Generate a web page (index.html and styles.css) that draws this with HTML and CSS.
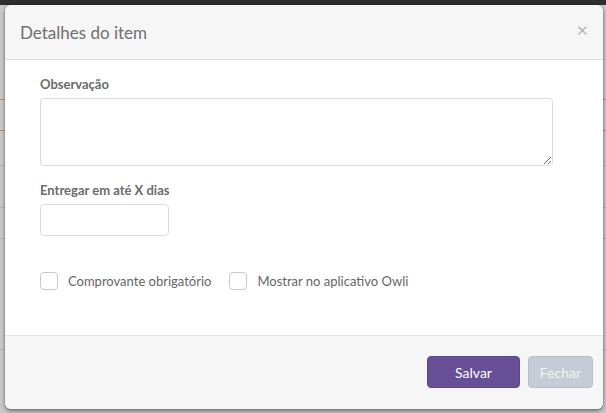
FILE: index.html
```html
<!DOCTYPE html>
<html lang="pt-BR">
<head>
    <meta charset="UTF-8">
    <meta name="viewport" content="width=device-width, initial-scale=1.0">
    <title>Detalhes do item</title>
    <link rel="stylesheet" href="styles.css">
</head>
<body>
    <div class="backdrop">
        <div class="modal">
            <div class="modal-header">
                <h4 class="modal-title">Detalhes do item</h4>
                <button class="close-btn" type="button">&times;</button>
            </div>

            <div class="modal-body">
                <div class="form-group">
                    <label class="form-label" for="obs">Observação</label>
                    <textarea class="form-control obs" id="obs"></textarea>
                </div>

                <div class="form-group">
                    <label class="form-label" for="dias">Entregar em até X dias</label>
                    <input class="form-control dias" id="dias" type="text">
                </div>

                <div class="checks">
                    <label class="check">
                        <span class="check-box"></span>
                        Comprovante obrigatório
                    </label>
                    <label class="check">
                        <span class="check-box"></span>
                        Mostrar no aplicativo Owli
                    </label>
                </div>
            </div>

            <div class="modal-footer">
                <button class="btn btn-primary" type="button">Salvar</button>
                <button class="btn btn-default" type="button">Fechar</button>
            </div>
        </div>
    </div>
</body>
</html>
```

FILE: styles.css
```css
* {
    margin: 0;
    padding: 0;
    box-sizing: border-box;
    font-family: Lato, 'Open Sans', sans-serif;
}

body {
    width: 606px;
    height: 413px;
    overflow: hidden;
    background: #c9c9c9;
}

/* página escurecida atrás do modal */
.backdrop {
    height: 413px;
    padding-top: 5px;
    background:
        linear-gradient(#2e2e2e, #2e2e2e) top / 100% 5px no-repeat,
        linear-gradient(#d9806f, #d9806f) 0 99px / 100% 1px no-repeat,
        linear-gradient(#d9806f, #d9806f) 0 130px / 100% 1px no-repeat,
        linear-gradient(#b4b4b4, #b4b4b4) 0 165px / 100% 1px no-repeat,
        linear-gradient(#b4b4b4, #b4b4b4) 0 207px / 100% 1px no-repeat,
        linear-gradient(#b4b4b4, #b4b4b4) 0 238px / 100% 1px no-repeat,
        linear-gradient(#b4b4b4, #b4b4b4) 0 349px / 100% 1px no-repeat,
        #c9c9c9;
}

.modal {
    width: 598px;
    height: 404px;
    margin-left: 5px;
    background: #fff;
    border-radius: 6px;
    overflow: hidden;
    box-shadow: 0 2px 4px rgba(0, 0, 0, 0.45), 0 0 1px rgba(0, 0, 0, 0.6);
    display: flex;
    flex-direction: column;
}

.modal-header {
    height: 55px;
    background: #f6f6f6;
    border-bottom: 1px solid #dedede;
    display: flex;
    align-items: center;
    justify-content: space-between;
    padding: 0 15px 0 15px;
}

.modal-title {
    font-size: 17px;
    font-weight: normal;
    color: #6f6f6f;
    margin-top: 1px;
}

.close-btn {
    border: none;
    background: none;
    color: #b5b5b5;
    font-size: 20px;
    line-height: 1;
    margin-top: -7px;
    cursor: pointer;
}

.modal-body {
    height: 275px;
    padding: 15px 50px 0 35px;
}

.form-group {
    display: flex;
    flex-direction: column;
    align-items: flex-start;
    margin-bottom: 15px;
}

.form-label {
    font-size: 13px;
    font-weight: bold;
    color: #6b6b6b;
    line-height: 18px;
    margin-bottom: 5px;
}

.form-control {
    border: 1px solid #dcdcdc;
    border-radius: 4px;
    background: #fff;
    font-size: 13px;
}

.obs {
    width: 513px;
    height: 68px;
    resize: vertical;
}

.dias {
    width: 129px;
    height: 32px;
}

.checks {
    display: flex;
    gap: 18px;
    margin-top: 36px;
}

.check {
    display: flex;
    align-items: center;
    gap: 10px;
    font-size: 13px;
    color: #666;
    cursor: pointer;
}

.check-box {
    width: 18px;
    height: 18px;
    border: 1px solid #c9c9c9;
    border-radius: 4px;
    background: #fff;
}

.modal-footer {
    flex: 1;
    background: #f6f6f6;
    border-top: 1px solid #e2e2e2;
    display: flex;
    justify-content: flex-end;
    align-items: flex-start;
    gap: 8px;
    padding: 20px 10px 0 0;
}

.btn {
    height: 32px;
    border-radius: 4px;
    font-size: 14px;
    cursor: pointer;
}

.btn-primary {
    width: 93px;
    background: #674f98;
    border: 1px solid #5e468d;
    color: #fff;
}

.btn-default {
    width: 65px;
    background: #c6cbd5;
    border: 1px solid #b9bfca;
    color: #f3f3f3;
}
```
